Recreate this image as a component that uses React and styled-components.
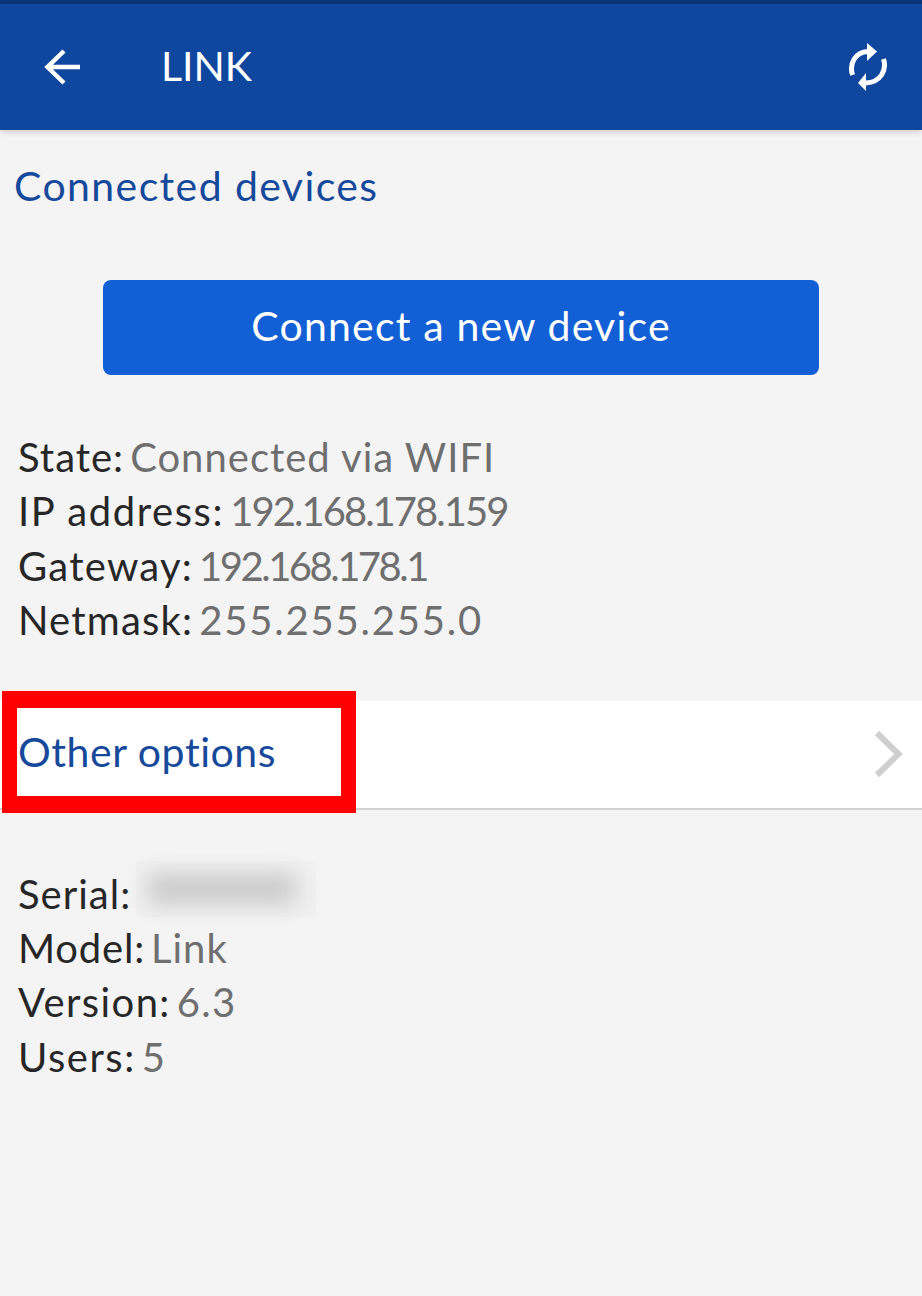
import React from "react";
import styled, { createGlobalStyle } from "styled-components";

const Global = createGlobalStyle`
  html, body { margin: 0; padding: 0; background: #f4f4f4; }
  body { font-family: "Lato", "Open Sans", sans-serif; }
`;

const Page = styled.div`
  width: 922px;
  height: 1296px;
  background: #f4f4f4;
  overflow: hidden;
`;
const StatusBar = styled.div`
  height: 4px;
  background: #0a3578;
`;
const Header = styled.header`
  height: 126px;
  background: #0f479f;
  box-shadow: 0 2px 6px rgba(0, 0, 0, 0.16);
  display: flex;
  align-items: center;
  color: #fff;
  padding: 0 34px 0 44px;
  position: relative;
`;
const HeaderTitle = styled.h1`
  margin: 0 0 4px 79px;
  flex: 1;
  font-size: 41px;
  font-weight: 400;
  line-height: 1;
`;
const SectionTitle = styled.h2`
  margin: 31px 0 0 14px;
  font-size: 41px;
  line-height: 50px;
  font-weight: 400;
  color: #17499b;
  letter-spacing: 1.4px;
`;
const ButtonRow = styled.div`
  display: flex;
  justify-content: center;
  margin-top: 69px;
`;
const PrimaryButton = styled.button`
  width: 716px;
  height: 95px;
  border: 0;
  border-radius: 8px;
  padding: 0 0 4px;
  background: #1360d6;
  color: #fff;
  font-family: inherit;
  font-size: 41px;
  letter-spacing: 1.2px;
`;
const InfoList = styled.div`
  margin-left: 18px;
  margin-top: ${(p) => p.$top}px;
  display: flex;
  flex-direction: column;
`;
const InfoLine = styled.div`
  height: 54.4px;
  line-height: 54.4px;
  font-size: 40px;
  display: flex;
  gap: 6px;
  white-space: nowrap;
`;
const Label = styled.span`
  color: #272727;
  letter-spacing: ${(p) => p.$spacing ?? 1}px;
`;
const Value = styled.span`
  color: #6f6f6f;
  letter-spacing: ${(p) => p.$spacing ?? 1}px;
`;
const Redacted = styled.span`
  display: block;
  width: 180px;
  height: 56px;
  margin: -6px 0 0 -1px;
  background: #f1f1f1;
  position: relative;
  &::after {
    content: "";
    position: absolute;
    left: 12px;
    right: 20px;
    top: 12px;
    bottom: 12px;
    background: #cbcbcb;
    filter: blur(11px);
  }
`;
const OptionRow = styled.div`
  margin-top: 53px;
  height: 107px;
  background: #fff;
  border-bottom: 2px solid #d2d2d2;
  display: flex;
  align-items: center;
  justify-content: space-between;
  padding: 0 18px;
  position: relative;
`;
const OptionText = styled.span`
  font-size: 41px;
  color: #17499b;
  letter-spacing: 0.55px;
  position: relative;
  top: -3px;
`;
const Highlight = styled.div`
  position: absolute;
  left: 2px;
  top: -10px;
  width: 354px;
  height: 122px;
  box-sizing: border-box;
  border: solid #ff0000;
  border-width: 17px 15px 17px 15px;
`;
const Icon = styled.svg`
  display: block;
  flex: none;
`;

export default function App() {
  return (
    <Page>
      <Global />
      <StatusBar />
      <Header>
        <Icon width="38" height="38" viewBox="0 0 38 38" fill="none" stroke="#fff" strokeWidth="4.5">
          <path d="M36 19H4M20 3 3.500 19 20 35" />
        </Icon>
        <HeaderTitle>LINK</HeaderTitle>
        <Icon width="40" height="50" viewBox="0 0 40 50" fill="none">
          <path d="M4.500 33C1 22 7 10 20 9.500" stroke="#fff" strokeWidth="5" />
          <path d="M19 1 29 9.500 19 19Z" fill="#fff" />
          <path d="M35.500 17C39 28 33 40 18 41" stroke="#fff" strokeWidth="5" />
          <path d="M18 49 10 41 18 31Z" fill="#fff" />
        </Icon>
      </Header>
      <SectionTitle>Connected devices</SectionTitle>
      <ButtonRow>
        <PrimaryButton>Connect a new device</PrimaryButton>
      </ButtonRow>
      <InfoList $top={55}>
        <InfoLine><Label>State:</Label><Value>Connected via WIFI</Value></InfoLine>
        <InfoLine><Label $spacing={1.6}>IP address:</Label><Value $spacing={-1.95}>192.168.178.159</Value></InfoLine>
        <InfoLine><Label $spacing={1.25}>Gateway:</Label><Value $spacing={-2.5}>192.168.178.1</Value></InfoLine>
        <InfoLine><Label $spacing={1.2}>Netmask:</Label><Value $spacing={1.8}>255.255.255.0</Value></InfoLine>
      </InfoList>
      <OptionRow>
        <OptionText>Other options</OptionText>
        <Icon width="30" height="48" viewBox="0 0 30 48" fill="none" stroke="#cfcfcf" strokeWidth="6">
          <path d="M3 3 24.500 24 3 45" />
        </Icon>
        <Highlight />
      </OptionRow>
      <InfoList $top={57}>
        <InfoLine><Label>Serial:</Label><Redacted /></InfoLine>
        <InfoLine><Label $spacing={0.8}>Model:</Label><Value>Link</Value></InfoLine>
        <InfoLine><Label $spacing={1.4}>Version:</Label><Value $spacing={1.3}>6.3</Value></InfoLine>
        <InfoLine><Label $spacing={1.5}>Users:</Label><Value>5</Value></InfoLine>
      </InfoList>
    </Page>
  );
}
